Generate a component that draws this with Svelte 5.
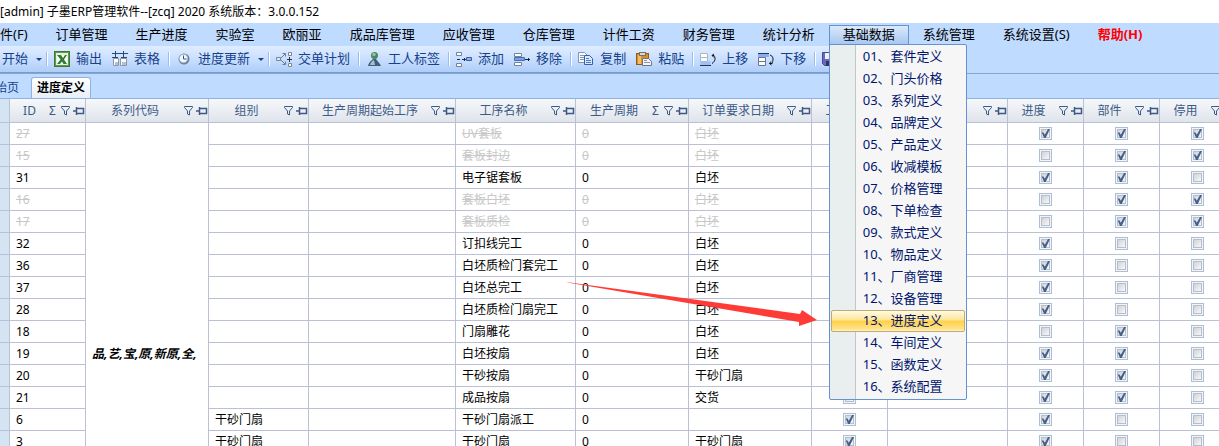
<script>
    let openMenu = $state('基础数据');
    let selected = $state(12);

    const menus = [
        '文件(F)', '订单管理', '生产进度', '实验室', '欧丽亚', '成品库管理', '应收管理', '仓库管理',
        '计件工资', '财务管理', '统计分析', '基础数据', '系统管理', '系统设置(S)', '帮助(H)',
    ];

    const baseData = [
        '套件定义', '门头价格', '系列定义', '品牌定义', '产品定义', '收减模板', '价格管理', '下单检查',
        '款式定义', '物品定义', '厂商管理', '设备管理', '进度定义', '车间定义', '函数定义', '系统配置',
    ];

    // each group is followed by a separator
    const toolGroups = [
        [{ label: '开始', arrow: true }],
        [{ label: '输出', icon: 'excel' }, { label: '表格', icon: 'table' }],
        [{ label: '进度更新', icon: 'clock', arrow: true }],
        [{ label: '交单计划', icon: 'plan' }],
        [{ label: '工人标签', icon: 'person' }],
        [{ label: '添加', icon: 'add' }, { label: '移除', icon: 'remove' }],
        [{ label: '复制', icon: 'copy' }, { label: '粘贴', icon: 'paste' }],
        [{ label: '上移', icon: 'up' }, { label: '下移', icon: 'down' }],
        [{ label: '', icon: 'save' }],
    ];

    const columns = [
        { title: 'ID', width: 76, sum: true },
        { title: '系列代码', width: 123 },
        { title: '组别', width: 100 },
        { title: '生产周期起始工序', width: 147 },
        { title: '工序名称', width: 120 },
        { title: '生产周期', width: 113, sum: true },
        { title: '订单要求日期', width: 123 },
        { title: '工序', width: 76 },
        { title: '', width: 120 },
        { title: '进度', width: 76 },
        { title: '部件', width: 76 },
        { title: '停用', width: 76 },
    ];

    let rows = $state([
        { id: 27, group: '', name: 'UV套板', due: '白坯', wage: false, progress: true, part: true, off: true },
        { id: 15, group: '', name: '套板封边', due: '白坯', wage: false, progress: false, part: true, off: true },
        { id: 31, group: '', name: '电子锯套板', due: '白坯', wage: false, progress: true, part: true, off: false },
        { id: 16, group: '', name: '套板白坯', due: '白坯', wage: false, progress: false, part: true, off: true },
        { id: 17, group: '', name: '套板质检', due: '白坯', wage: false, progress: false, part: true, off: true },
        { id: 32, group: '', name: '订扣线完工', due: '白坯', wage: false, progress: true, part: false, off: false },
        { id: 36, group: '', name: '白坯质检门套完工', due: '白坯', wage: false, progress: true, part: false, off: false },
        { id: 37, group: '', name: '白坯总完工', due: '白坯', wage: false, progress: true, part: false, off: false },
        { id: 28, group: '', name: '白坯质检门扇完工', due: '白坯', wage: false, progress: true, part: false, off: false },
        { id: 18, group: '', name: '门扇雕花', due: '白坯', wage: false, progress: false, part: true, off: false },
        { id: 19, group: '', name: '白坯按扇', due: '白坯', wage: false, progress: true, part: true, off: false },
        { id: 20, group: '', name: '干砂按扇', due: '干砂门扇', wage: false, progress: true, part: true, off: false },
        { id: 21, group: '', name: '成品按扇', due: '交货', wage: false, progress: true, part: true, off: false },
        { id: 6, group: '干砂门扇', name: '干砂门扇派工', due: '', wage: true, progress: true, part: false, off: false },
        { id: 3, group: '干砂门扇', name: '干砂门扇', due: '干砂门扇', wage: true, progress: true, part: false, off: false },
    ]);

    // blank rows below the data, still inside the merged series cell
    const blankRows = 6;
</script>

{#snippet icon(name)}
    <svg class="icon" width="16" height="16" viewBox="0 0 16 16" fill="none" aria-hidden="true">
        {#if name === 'excel'}
            <rect x="0.5" y="0.5" width="15" height="15" fill="#e4efdc" stroke="#3f7a35"/>
            <rect x="1.5" y="1.5" width="13" height="13" stroke="#5f9950"/>
            <rect x="3" y="4" width="10" height="9" fill="#fff"/>
            <path d="M3 4h4l2 3 2-3h2l-3 4.500 3 4.500H9.500L8 10.500 6 13H3l3.500-4.500z" fill="#2f7d32"/>
        {:else if name === 'table'}
            <path d="M0 2.500h16M3.500 0v6M11.500 0v6M0 6.500h6M9 6.500h6" stroke="#2a4777"/>
            <path d="M1.500 7.500h5v7h-5zM8.500 7.500h6v7h-6z" fill="#fff" stroke="#8a97ad"/>
            <path d="M3 11h3v3H3zM10 11h4v3h-4z" fill="#b4bfd0"/>
        {:else if name === 'clock'}
            <circle cx="8" cy="8" r="5.500" fill="#708098"/>
            <circle cx="7.500" cy="7.500" r="4.200" fill="#f4f8ff" stroke="#a5b4cc"/>
            <path d="M7.500 4.500v3.500h3" stroke="#2953a0"/>
        {:else if name === 'plan'}
            <path d="M0.500 6.500h4v3h-4z" fill="#dfe5ee" stroke="#7b8698"/>
            <path d="M5 7l4-4M5 9l4 4M6.500 2.500h3v3M6.500 13.500h3v-3" stroke="#6f7d94"/>
            <path d="M12.500 1.500h3v3h-3zM12.500 12.500h3v3h-3z" fill="#fff" stroke="#7c8697"/>
            <path d="M11 8.500h5M13.500 6v5" stroke="#2b3340"/>
        {:else if name === 'person'}
            <path d="M2 15c1-4 3-5 5-7h3c1 2 4 4 5 7z" fill="#3f5f7c"/>
            <path d="M4 14c1-3 2-4 4-5l1 5z" fill="#a4c2c4"/>
            <circle cx="8.500" cy="4.500" r="3.500" fill="#4d8563"/>
            <circle cx="8" cy="3.500" r="1.700" fill="#93c49c"/>
        {:else if name === 'add'}
            <path d="M0.500 1.500h5v3h-5zM0.500 12.500h5v3h-5z" fill="#fff" stroke="#75839a"/>
            <path d="M1 8.500h3M6 8.500h4M8.500 7v3" stroke="#1e3050"/>
            <path d="M10.500 6.500h5v3h-5z" fill="#8db4ee" stroke="#3d5f9b"/>
        {:else if name === 'remove'}
            <path d="M0.500 2.500h7v3h-7zM0.500 11.500h7v3h-7z" fill="#fff" stroke="#75839a"/>
            <path d="M0.500 6.500h10v3h-10z" fill="#78a2e8" stroke="#4470b4"/>
            <path d="M11 8.500h5M14.500 7v3" stroke="#1a2436"/>
        {:else if name === 'copy'}
            <path d="M0.500 1.500h6l3 3v7h-9z" fill="#f8fbff" stroke="#8794ac"/>
            <path d="M2 4.500h4M2 6.500h5M2 8.500h5" stroke="#7f93b6"/>
            <path d="M6.500 4.500h5l3 3v6h-8z" fill="#dbe8fd" stroke="#335fae"/>
            <path d="M8 7.500h3M8 9.500h5M8 11.500h5" stroke="#4e7acb"/>
        {:else if name === 'paste'}
            <rect x="0.500" y="2.500" width="12" height="11" fill="#d98e2e" stroke="#8f5a1c"/>
            <path d="M2 4h3v9H2z" fill="#f3bd67"/>
            <rect x="3.500" y="1.500" width="6" height="3" fill="#d8d8d8" stroke="#77715f"/>
            <path d="M6.500 7.500h6l3 3v4h-9z" fill="#f3f5f8" stroke="#6e7480"/>
            <path d="M8 9.500h3M8 11.500h6" stroke="#8b93a1"/>
        {:else if name === 'up'}
            <path d="M0.500 2.500h7v4h-7zM0.500 6.500h7v4h-7z" fill="#fff" stroke="#a9b6c9"/>
            <path d="M0.500 10.500h10v4h-10z" fill="#9fc0f3"/>
            <path d="M0 14.500h11" stroke="#1b3566"/>
            <path d="M12 4.500h2c2 3 1 6-2 8M14 3l-2 1.500 2 2" stroke="#10151f"/>
        {:else if name === 'down'}
            <path d="M0 2.500h11" stroke="#1b3566"/>
            <path d="M0 3h11v3H0z" fill="#86aef0"/>
            <path d="M0.500 6.500h7v4h-7zM0.500 10.500h7v4h-7z" fill="#fff" stroke="#66748c"/>
            <path d="M12 4c3 1 4 4 2 8M11.500 12.500h3M13 10.500l-1.500 2 2 1.500" stroke="#10151f"/>
        {:else if name === 'save'}
            <path d="M0.500 1.500h15v13h-13l-2-2z" fill="#6a68c4" stroke="#4a478f"/>
            <path d="M3 2h10v6H3z" fill="#eef2fb"/>
            <path d="M4 10h8v5H4z" fill="#33365a"/>
        {/if}
    </svg>
{/snippet}

<div class="window">
    <header class="title">[admin] 子墨ERP管理软件--[zcq] 2020 系统版本：3.0.0.152</header>

    <nav class="menubar">
        {#each menus as menu}
            <div class="menu" class:open={openMenu === menu}>
                <button class="menu-btn" class:help={menu === '帮助(H)'} onclick={() => (openMenu = menu)}>{menu}</button>
                {#if menu === '基础数据' && openMenu === menu}
                    <div class="popup">
                        {#each baseData as item, i}
                            <button class="popup-item" class:active={selected === i} onclick={() => (selected = i)}>
                                {String(i + 1).padStart(2, '0')}、{item}
                            </button>
                        {/each}
                    </div>
                {/if}
            </div>
        {/each}
    </nav>

    <div class="toolrow">
        <div class="toolbar">
            {#each toolGroups as group}
                {#each group as tool}
                    <button class="tool" class:split={tool.arrow} aria-label={tool.label || tool.icon}>
                        {#if tool.icon}{@render icon(tool.icon)}{/if}
                        <span>{tool.label}</span>
                        {#if tool.arrow}<i class="caret"></i>{/if}
                    </button>
                {/each}
                <span class="sep"></span>
            {/each}
        </div>
    </div>

    <div class="tabs">
        <button class="tab">起始页</button>
        <button class="tab current">进度定义</button>
    </div>

    <div class="grid">
        <table>
            <colgroup>
                <col style="width: 10px" />
                {#each columns as col}
                    <col style="width: {col.width}px" />
                {/each}
            </colgroup>
            <thead>
                <tr>
                    <th class="rowhead"></th>
                    {#each columns as col}
                        <th>
                            <div class="head">
                                <span class="head-title">{col.title}</span>
                                {#if col.sum}<span class="sigma">Σ</span>{/if}
                                <svg width="24" height="12" viewBox="0 0 24 12" fill="none" stroke="#3d5a86" aria-hidden="true">
                                    <path d="M0.500 1.500h8v1l-3 3.500v4l-2-1v-3l-3-3.500z"/>
                                    <path d="M12 6h3M15.500 2v8" stroke-width="1.500"/>
                                    <path d="M16 3.500h6.500v5H16" stroke-width="1.500"/>
                                </svg>
                            </div>
                        </th>
                    {/each}
                </tr>
            </thead>
            <tbody>
                {#each rows as row, i}
                    <tr class:off={row.off}>
                        <td class="rowhead"></td>
                        <td>{row.id}</td>
                        {#if i === 0}
                            <td class="series" rowspan={rows.length + blankRows}>品,艺,宝,原,新原,全,</td>
                        {/if}
                        <td>{row.group}</td>
                        <td></td>
                        <td>{row.name}</td>
                        <td>0</td>
                        <td>{row.due}</td>
                        <td class="check"><input type="checkbox" aria-label="工序" bind:checked={row.wage} /></td>
                        <td></td>
                        <td class="check"><input type="checkbox" aria-label="进度" bind:checked={row.progress} /></td>
                        <td class="check"><input type="checkbox" aria-label="部件" bind:checked={row.part} /></td>
                        <td class="check"><input type="checkbox" aria-label="停用" bind:checked={row.off} /></td>
                    </tr>
                {/each}
                {#each { length: blankRows } as _}
                    <tr>
                        <td class="rowhead"></td>
                        {#each { length: columns.length - 1 } as _}<td></td>{/each}
                    </tr>
                {/each}
            </tbody>
        </table>
    </div>

    <svg class="pointer" width="252" height="46" viewBox="0 0 252 46" aria-hidden="true">
        <path d="M0 0L234 32L236 28L251 38L233 44L233 40L4 1Z" fill="#ff3b37"/>
    </svg>
</div>

<style>
    :global(body) {
        margin: 0;
    }

    .window {
        position: relative;
        height: 100vh;
        overflow: hidden;
        display: flex;
        flex-direction: column;
        background: #bfdbff;
        font-family: "Noto Sans", "Noto Sans CJK SC", sans-serif;
        font-size: 12px;
        line-height: 16px;
        color: #000;
    }

    button {
        font: inherit;
        color: inherit;
        background: none;
        border: 0;
        padding: 0;
        margin: 0;
        white-space: nowrap;
    }

    .title {
        flex: none;
        height: 23px;
        line-height: 23px;
        background: #fff;
        white-space: nowrap;
    }

    /* menu bar */
    .menubar {
        flex: none;
        display: flex;
        height: 23px;
        margin-left: -27px;
        font-size: 13px;
    }
    .menu {
        position: relative;
        box-sizing: border-box;
        height: 20px;
        margin-top: 2px;
        border: 1px solid transparent;
        border-bottom: 0;
    }
    .menu.open {
        border-color: #6593cf;
        background: linear-gradient(#dbe9fc, #a5c5f0);
    }
    .menu-btn {
        display: block;
        padding: 0 13px;
        line-height: 16px;
    }
    .help {
        color: #f00;
        font-weight: bold;
    }

    .popup {
        position: absolute;
        z-index: 2;
        top: 18px;
        left: -1px;
        box-sizing: border-box;
        width: 138px;
        padding: 1px;
        border: 1px solid #6593cf;
        border-radius: 0 2px 2px 2px;
        background: linear-gradient(90deg, #e9eeee 25px, #c5c5c5 25px, #c5c5c5 26px, #f6f6f6 26px);
    }
    .popup-item {
        display: block;
        box-sizing: border-box;
        width: 100%;
        height: 22px;
        padding: 0 0 2px 31px;
        border: 1px solid transparent;
        border-radius: 2px;
        line-height: 18px;
        text-align: left;
        color: #00156e;
    }
    .popup-item.active {
        border-color: #c2a978;
        background: linear-gradient(#fffbe6, #ffe592 45%, #ffd048 50%, #ffe38a 90%, #fff3c4);
    }

    /* toolbar */
    .toolrow {
        flex: none;
        border-bottom: 1px solid #8ea4c4;
    }
    .toolbar {
        display: flex;
        align-items: center;
        width: 860px;
        height: 27px;
        box-sizing: border-box;
        overflow: hidden;
        margin-left: -3px;
        border-bottom: 1px solid #6f9dd9;
        background: linear-gradient(#e0edff, #c9dfff 50%, #aecdf8);
        font-size: 13px;
        color: #15428b;
    }
    .tool {
        flex: none;
        display: flex;
        align-items: center;
        gap: 6px;
        height: 24px;
        padding: 0 5px;
    }
    .tool span {
        padding-bottom: 2px;
    }
    .tool.split {
        padding-right: 1px;
    }
    .icon {
        flex: none;
        display: block;
    }
    .caret {
        margin-left: 2px;
        border: 3px solid transparent;
        border-top-color: #15428b;
        border-bottom: 0;
    }
    .sep {
        flex: none;
        width: 1px;
        height: 14px;
        margin: 0 1px 0 3px;
        border-right: 1px solid #fff;
        background: #9abdea;
    }

    /* document tabs */
    .tabs {
        flex: none;
        display: flex;
        align-items: flex-end;
        gap: 6px;
        height: 24px;
        margin-left: -23px;
        border-bottom: 1px solid #8db2e3;
    }
    .tab {
        box-sizing: border-box;
        height: 21px;
        padding: 0 6px;
        color: #15428b;
    }
    .tab.current {
        padding: 0 5px;
        border: 1px solid #8db2e3;
        border-bottom: 0;
        border-radius: 3px 3px 0 0;
        background: linear-gradient(#fff, #e8eef6);
        color: #000;
        font-weight: bold;
    }

    /* data grid */
    .grid {
        flex: 1;
        min-height: 0;
        overflow: hidden;
        background: #fff;
    }
    table {
        width: 1236px;
        table-layout: fixed;
        border-collapse: separate;
        border-spacing: 0;
    }
    th,
    td {
        box-sizing: border-box;
        height: 22px;
        padding: 0 6px;
        border-right: 1px solid #bbc0d4;
        border-bottom: 1px solid #bbc0d4;
        white-space: nowrap;
        text-align: left;
    }
    th {
        height: 24px;
        padding: 0;
        background: linear-gradient(#f6f8fa, #dfe4ec);
        font-weight: normal;
        color: #3d5a86;
    }
    .rowhead {
        padding: 0;
        background: #d5e4f2;
    }
    .head {
        display: flex;
        align-items: center;
    }
    .head-title {
        flex: 1;
        text-align: center;
    }
    .sigma {
        width: 12px;
    }
    .off td:not(.series) {
        color: #c8c8c8;
        text-decoration: line-through;
    }
    .series {
        font-weight: bold;
        font-style: italic;
    }
    .check {
        padding: 0;
        text-align: center;
    }

    input {
        appearance: none;
        position: relative;
        display: block;
        box-sizing: border-box;
        width: 13px;
        height: 13px;
        margin: 0 auto;
        border: 1px solid #a9bfdc;
        background: #f4f4f4;
    }
    input::before {
        content: "";
        position: absolute;
        inset: 1px;
        border: 1px solid #b9bdc8;
        background: linear-gradient(135deg, #cfd2da, #f8f8f8);
    }
    input:checked::after {
        content: "";
        position: absolute;
        inset: 1px;
        background: #42618f;
        clip-path: polygon(8% 40%, 28% 40%, 42% 65%, 78% 0, 100% 0, 52% 100%, 34% 100%);
    }

    .pointer {
        position: absolute;
        z-index: 3;
        left: 566px;
        top: 282px;
    }
</style>
